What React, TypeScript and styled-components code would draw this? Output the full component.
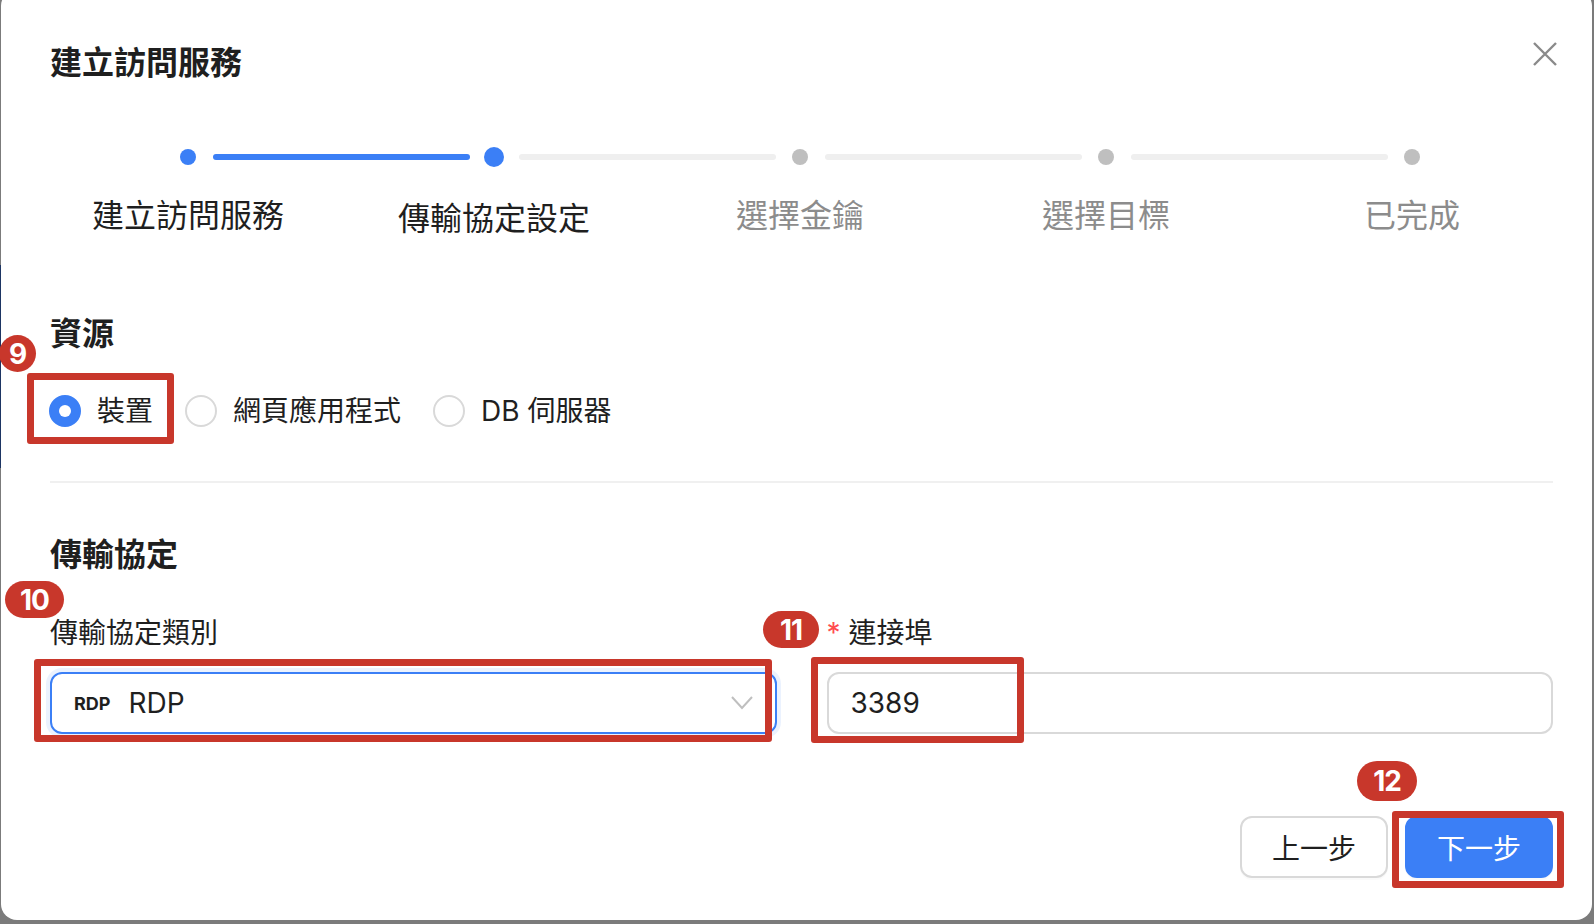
import React from "react";
import styled, { createGlobalStyle } from "styled-components";

const GlobalStyle = createGlobalStyle`
  html, body {
    margin: 0;
    padding: 0;
  }
  body {
    background:
      linear-gradient(to bottom, transparent 265px, #1d3563 265px, #1d3563 468px, transparent 468px) no-repeat 0 0 / 1px 100%,
      #7b7b7b;
    font-family: "Inter", "Noto Sans CJK TC", sans-serif;
    color: #1f1f1f;
    overflow: hidden;
  }
`;

const BLUE = "#3b7ff6";
const RED = "#c8372b";

const Page = styled.div`
  position: relative;
  display: flow-root;
  width: 1594px;
  height: 924px;
  padding-left: 1px;
  box-sizing: border-box;
`;

const Modal = styled.div`
  width: 1591px;
  margin-top: -10px;
  background: #fff;
  border-radius: 16px;
  padding: 49px 39px 42px 49px;
  box-sizing: border-box;
`;

const Header = styled.div`
  display: flex;
  justify-content: space-between;
  align-items: flex-start;
`;

const Title = styled.h2`
  margin: 0;
  font-size: 32px;
  line-height: 48px;
  font-weight: 600;
  color: #1f1f1f;
`;

const CloseButton = styled.button`
  width: 24px;
  height: 24px;
  padding: 0;
  margin: 3px -4px 0 0;
  border: none;
  background: none;
  display: flex;
  cursor: pointer;
`;

const Stepper = styled.div`
  margin-top: 60px;
`;

const Track = styled.div`
  display: flex;
  align-items: center;
  height: 20px;
  margin-left: 128px;
`;

const DotWrap = styled.div`
  flex-shrink: 0;
  width: 20px;
  height: 20px;
  display: flex;
  align-items: center;
  justify-content: center;
`;

const Dot = styled.span<{ $size: number; $on: boolean }>`
  width: ${(p) => p.$size}px;
  height: ${(p) => p.$size}px;
  border-radius: 50%;
  background: ${(p) => (p.$on ? BLUE : "#bfbfbf")};
`;

const Connector = styled.span<{ $on: boolean }>`
  flex-shrink: 0;
  width: 257px;
  height: 6px;
  border-radius: 3px;
  margin: 0 14.5px;
  background: ${(p) => (p.$on ? BLUE : "#efefef")};
`;

const Labels = styled.div`
  display: flex;
  height: 48px;
  margin-top: 25px;
  margin-left: -15px;
`;

const StepLabel = styled.div<{ $on: boolean; $current: boolean }>`
  flex: 0 0 306px;
  text-align: center;
  font-size: 32px;
  line-height: 48px;
  white-space: nowrap;
  padding-top: ${(p) => (p.$current ? 3 : 0)}px;
  color: ${(p) => (p.$on ? "#1f1f1f" : "#8c8c8c")};
`;

const SectionTitle = styled.h3<{ $top: number }>`
  margin: ${(p) => p.$top}px 0 0;
  font-size: 32px;
  line-height: 48px;
  font-weight: 600;
  color: #1f1f1f;
`;

const RadioGroup = styled.div`
  display: flex;
  align-items: center;
  height: 48px;
  margin-top: 29px;
  margin-left: -1px;
`;

const RadioItem = styled.label`
  display: flex;
  align-items: center;
  margin-right: 16px;
  cursor: pointer;
`;

const RadioCircle = styled.span<{ $checked: boolean }>`
  width: 32px;
  height: 32px;
  box-sizing: border-box;
  border-radius: 50%;
  display: flex;
  align-items: center;
  justify-content: center;
  background: ${(p) => (p.$checked ? BLUE : "#fff")};
  border: 2px solid ${(p) => (p.$checked ? BLUE : "#d9d9d9")};

  &::after {
    content: "";
    display: ${(p) => (p.$checked ? "block" : "none")};
    width: 12px;
    height: 12px;
    border-radius: 50%;
    background: #fff;
  }
`;

const RadioText = styled.span`
  padding: 0 16px;
  font-size: 28px;
  line-height: 44px;
  color: #1f1f1f;
`;

const Divider = styled.div`
  height: 2px;
  margin-top: 46px;
  background: #f0f0f0;
`;

const FormRow = styled.div`
  display: grid;
  grid-template-columns: 1fr 1fr;
  column-gap: 50px;
  margin-top: 32px;
`;

const Field = styled.div`
  display: flex;
  flex-direction: column;
`;

const FieldLabel = styled.div`
  font-size: 28px;
  line-height: 44px;
  color: #1f1f1f;
  margin-bottom: 17px;
`;

const Required = styled.span`
  color: #ff4d4f;
  margin-right: 8px;
`;

const SelectBox = styled.div`
  height: 62px;
  box-sizing: border-box;
  border: 2px solid ${BLUE};
  border-radius: 12px;
  box-shadow: 0 0 0 4px rgba(59, 127, 246, 0.1);
  padding: 0 22px;
  display: flex;
  align-items: center;
`;

const ProtoTag = styled.span`
  font-size: 18px;
  font-weight: 700;
  color: #1f1f1f;
`;

const SelectValue = styled.span`
  margin-left: 18px;
  font-size: 28px;
  color: #1f1f1f;
`;

const Chevron = styled.svg`
  margin-left: auto;
`;

const TextInput = styled.input`
  height: 62px;
  box-sizing: border-box;
  border: 2px solid #d9d9d9;
  border-radius: 12px;
  padding: 0 22px;
  font-family: "Inter", "Noto Sans CJK TC", sans-serif;
  font-size: 28px;
  color: #1f1f1f;
  outline: none;
`;

const Footer = styled.div`
  display: flex;
  justify-content: flex-end;
  gap: 17px;
  margin-top: 82px;
`;

const Button = styled.button<{ $primary?: boolean }>`
  height: 62px;
  padding: 0 30px;
  border-radius: 12px;
  font-family: "Inter", "Noto Sans CJK TC", sans-serif;
  font-size: 28px;
  cursor: pointer;
  box-shadow: 0 2px 0 rgba(0, 0, 0, 0.02);
  border: 2px solid ${(p) => (p.$primary ? BLUE : "#d9d9d9")};
  background: ${(p) => (p.$primary ? BLUE : "#fff")};
  color: ${(p) => (p.$primary ? "#fff" : "#1f1f1f")};
`;

// annotation overlays drawn on top of the screenshot
const Marker = styled.div<{ $x: number; $y: number; $w: number; $h: number }>`
  position: absolute;
  left: ${(p) => p.$x}px;
  top: ${(p) => p.$y}px;
  width: ${(p) => p.$w}px;
  height: ${(p) => p.$h}px;
  box-sizing: border-box;
  border: 7px solid ${RED};
  border-radius: 3px;
  pointer-events: none;
`;

const Badge = styled.div<{ $x: number; $y: number; $w: number; $h: number }>`
  position: absolute;
  left: ${(p) => p.$x}px;
  top: ${(p) => p.$y}px;
  width: ${(p) => p.$w}px;
  height: ${(p) => p.$h}px;
  border-radius: ${(p) => p.$h / 2}px;
  background: ${RED};
  color: #fff;
  font-family: "Inter", "Liberation Sans", sans-serif;
  font-weight: 700;
  font-size: 28px;
  display: flex;
  align-items: center;
  justify-content: center;
  letter-spacing: -1px;
`;

const steps = ["建立訪問服務", "傳輸協定設定", "選擇金鑰", "選擇目標", "已完成"];
const current = 1;

const resources = ["裝置", "網頁應用程式", "DB 伺服器"];

const markers = [
  { x: 27, y: 373, w: 147, h: 71 },
  { x: 34, y: 659, w: 738, h: 83 },
  { x: 811, y: 657, w: 213, h: 86 },
  { x: 1392, y: 811, w: 172, h: 77 },
];

const badges = [
  { label: "9", x: -1, y: 335, w: 37, h: 37 },
  { label: "10", x: 5, y: 581, w: 59, h: 37 },
  { label: "11", x: 763, y: 611, w: 56, h: 37 },
  { label: "12", x: 1357, y: 761, w: 60, h: 40 },
];

function App() {
  return (
    <Page>
      <GlobalStyle />
      <Modal>
        <Header>
          <Title>建立訪問服務</Title>
          <CloseButton aria-label="close">
            <svg width="24" height="24" viewBox="0 0 24 24">
              <path d="M1 1 L23 23 M23 1 L1 23" stroke="#8a8a8a" strokeWidth="2.4" />
            </svg>
          </CloseButton>
        </Header>

        <Stepper>
          <Track>
            {steps.map((s, i) => (
              <React.Fragment key={s}>
                <DotWrap>
                  <Dot $size={i === current ? 20 : 16} $on={i <= current} />
                </DotWrap>
                {i < steps.length - 1 && <Connector $on={i < current} />}
              </React.Fragment>
            ))}
          </Track>
          <Labels>
            {steps.map((s, i) => (
              <StepLabel key={s} $on={i <= current} $current={i === current}>
                {s}
              </StepLabel>
            ))}
          </Labels>
        </Stepper>

        <SectionTitle $top={70}>資源</SectionTitle>
        <RadioGroup>
          {resources.map((r, i) => (
            <RadioItem key={r}>
              <RadioCircle $checked={i === 0} />
              <RadioText>{r}</RadioText>
            </RadioItem>
          ))}
        </RadioGroup>

        <Divider />

        <SectionTitle $top={48}>傳輸協定</SectionTitle>
        <FormRow>
          <Field>
            <FieldLabel>傳輸協定類別</FieldLabel>
            <SelectBox>
              <ProtoTag>RDP</ProtoTag>
              <SelectValue>RDP</SelectValue>
              <Chevron width="22" height="14" viewBox="0 0 22 14">
                <polyline points="1,1 11,12 21,1" fill="none" stroke="#bfbfbf" strokeWidth="2" />
              </Chevron>
            </SelectBox>
          </Field>
          <Field>
            <FieldLabel>
              <Required>*</Required>連接埠
            </FieldLabel>
            <TextInput defaultValue="3389" />
          </Field>
        </FormRow>

        <Footer>
          <Button>上一步</Button>
          <Button $primary>下一步</Button>
        </Footer>
      </Modal>

      {markers.map((m, i) => (
        <Marker key={i} $x={m.x} $y={m.y} $w={m.w} $h={m.h} />
      ))}
      {badges.map((b) => (
        <Badge key={b.label} $x={b.x} $y={b.y} $w={b.w} $h={b.h}>
          {b.label}
        </Badge>
      ))}
    </Page>
  );
}

export default App;
